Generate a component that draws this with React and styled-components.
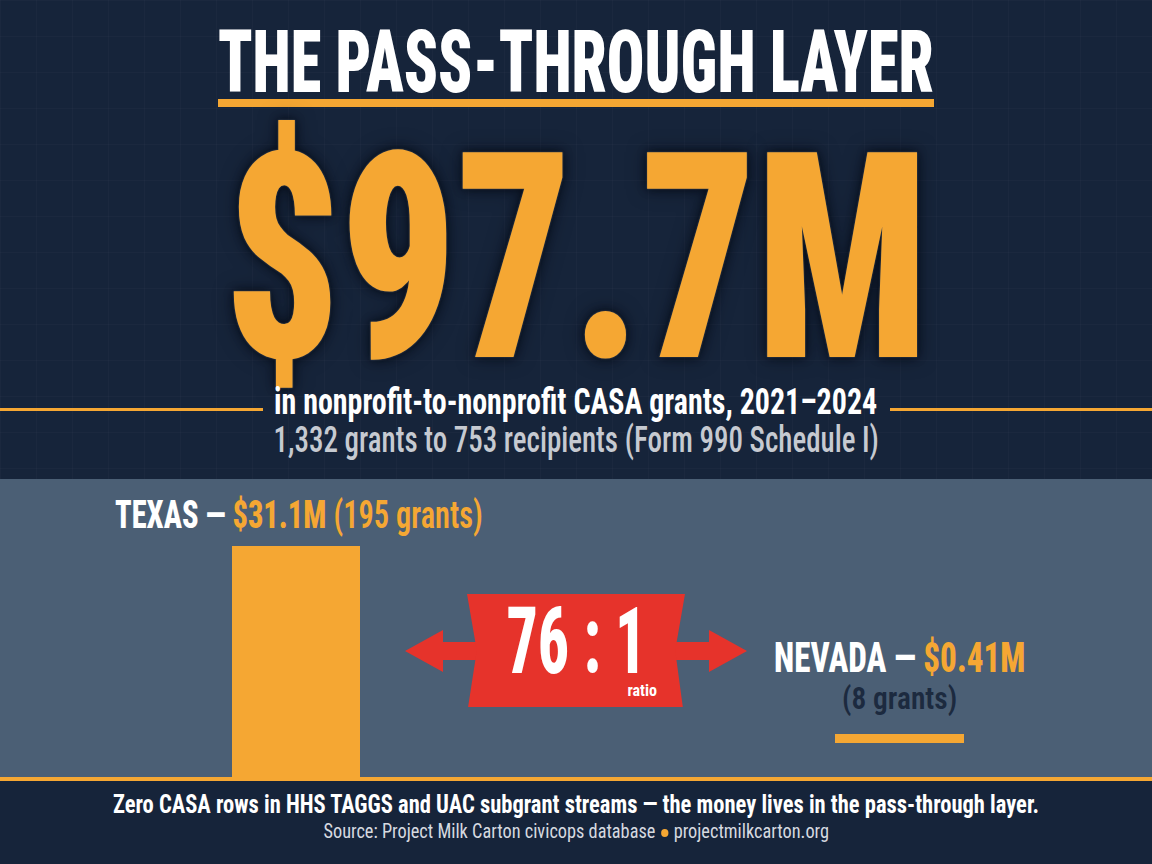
import React, { useLayoutEffect, useRef, useState } from "react";
import styled, { createGlobalStyle } from "styled-components";

const NAVY = "#16243a";
const SLATE = "#4b5f75";
const ORANGE = "#f5a733";
const RED = "#e6332b";

const GlobalStyle = createGlobalStyle`
  body {
    margin: 0;
    background: ${NAVY};
    font-family: "Roboto Condensed", "Roboto", sans-serif;
  }
`;

// squeezes a single line of text to an exact width (the poster uses a very narrow face)
const Fit = ({ width, align = "center", children }) => {
  const ref = useRef(null);
  const [scale, setScale] = useState(1);

  useLayoutEffect(() => {
    const measure = () => {
      const el = ref.current;
      if (el && el.offsetWidth) setScale(width / el.offsetWidth);
    };
    measure();
    if (document.fonts) document.fonts.ready.then(measure);
  }, [width]);

  return (
    <FitBox $width={width} $align={align}>
      <FitText ref={ref} $align={align} style={{ transform: `scaleX(${scale})` }}>
        {children}
      </FitText>
    </FitBox>
  );
};

const FitBox = styled.div`
  display: flex;
  justify-content: ${(p) => (p.$align === "left" ? "flex-start" : "center")};
  width: ${(p) => p.$width}px;
`;

const FitText = styled.span`
  flex: none;
  display: inline-block;
  white-space: nowrap;
  transform-origin: ${(p) => (p.$align === "left" ? "left" : "center")} center;
`;

const Poster = styled.div`
  width: 1152px;
  height: 864px;
  display: flex;
  flex-direction: column;
  overflow: hidden;
`;

const Hero = styled.section`
  height: 479px;
  flex: none;
  display: flex;
  flex-direction: column;
  align-items: center;
  padding-top: 24px;
  box-sizing: border-box;
  background-color: ${NAVY};
  background-image: linear-gradient(rgba(255, 255, 255, 0.018) 1px, transparent 1px),
    linear-gradient(90deg, rgba(255, 255, 255, 0.018) 1px, transparent 1px);
  background-size: 36px 36px;
`;

const Title = styled.h1`
  margin: 0;
  color: #ffffff;
  font-size: 87px;
  font-weight: 900;
  line-height: 76px;
`;

const Underline = styled.div`
  width: 716px;
  height: 8px;
  margin-top: -1px;
  background: ${ORANGE};
`;

const BigNumber = styled.div`
  margin-top: 37px;
  color: ${ORANGE};
  font-size: 288px;
  font-weight: 900;
  line-height: 230px;
  text-shadow: 0 0 2px rgba(150, 160, 170, 0.55), 0 0 10px rgba(3, 8, 18, 0.85),
    0 0 22px rgba(3, 8, 18, 0.5);
`;

const RuleRow = styled.div`
  align-self: stretch;
  display: grid;
  grid-template-columns: 1fr 603px 1fr;
  column-gap: 12px;
  margin-top: 8px;
`;

const Rule = styled.div`
  height: 3px;
  margin-top: 26px;
  background: ${ORANGE};
`;

const Lead = styled.div`
  color: #ffffff;
  font-size: 37px;
  font-weight: 700;
  line-height: 40px;
`;

const SubLead = styled.div`
  color: #c6cad1;
  font-size: 36px;
  font-weight: 500;
  line-height: 38px;
  margin-top: -1px;
`;

const Compare = styled.section`
  flex: 1;
  display: flex;
  padding-left: 115px;
  background: ${SLATE};
`;

const BigState = styled.div`
  width: 290px;
  flex: none;
  display: flex;
  flex-direction: column;
`;

const StateLine = styled.div`
  margin-top: ${(p) => p.$top}px;
  font-size: ${(p) => p.$size}px;
  font-weight: 800;
  line-height: ${(p) => p.$lh}px;
  color: #ffffff;
`;

const Amount = styled.span`
  color: ${ORANGE};
  font-weight: ${(p) => (p.$light ? 600 : 800)};
`;

const TexasBar = styled.div`
  flex: 1;
  width: 128px;
  margin: 11px 0 0 117px;
  background: ${ORANGE};
`;

const RatioGroup = styled.div`
  align-self: flex-start;
  margin-top: 115px;
  display: flex;
  align-items: center;
`;

const Arrow = styled.svg`
  flex: none;
  display: block;
  margin: ${(p) => (p.$side === "left" ? "0 -10px 0 0" : "0 0 0 -10px")};
`;

const Badge = styled.div`
  width: 218px;
  height: 113px;
  flex: none;
  display: flex;
  flex-direction: column;
  align-items: center;
  padding-top: 15px;
  box-sizing: border-box;
  background: ${RED};
  clip-path: polygon(0 0, 100% 0, 95.5% 50%, 99% 100%, 0.5% 100%, 4.5% 50%);
  color: #ffffff;
`;

const RatioNumber = styled.div`
  font-size: 93px;
  font-weight: 800;
  line-height: 66px;
`;

const RatioWord = styled.div`
  align-self: flex-end;
  margin: 8px 28px 0 0;
  font-size: 16px;
  font-weight: 700;
  line-height: 16px;
`;

const SmallState = styled.div`
  margin: 157px 0 0 27px;
  width: 251px;
  display: flex;
  flex-direction: column;
  align-items: center;
`;

const GrantCount = styled.div`
  margin-top: 2px;
  color: #1c2a3f;
  font-size: 31px;
  font-weight: 600;
  line-height: 34px;
`;

const NevadaBar = styled.div`
  width: 129px;
  height: 9px;
  margin-top: 18px;
  background: ${ORANGE};
`;

const Baseline = styled.div`
  height: 4px;
  flex: none;
  background: ${ORANGE};
`;

const Footer = styled.footer`
  height: 83px;
  flex: none;
  display: flex;
  flex-direction: column;
  align-items: center;
  padding-top: 10px;
  box-sizing: border-box;
  background: ${NAVY};
`;

const Takeaway = styled.div`
  color: #ffffff;
  font-size: 25px;
  font-weight: 700;
  line-height: 28px;
`;

const Source = styled.div`
  color: #d6dae0;
  font-size: 20px;
  font-weight: 400;
  line-height: 24px;
`;

const Dot = styled.span`
  display: inline-block;
  width: 8px;
  height: 8px;
  margin: 0 6px;
  border-radius: 50%;
  background: ${ORANGE};
  vertical-align: middle;
`;

export default function App() {
  return (
    <Poster>
      <GlobalStyle />
      <Hero>
        <Title>
          <Fit width={716}>THE PASS-THROUGH LAYER</Fit>
        </Title>
        <Underline />
        <BigNumber>
          <Fit width={704}>$97.7M</Fit>
        </BigNumber>
        <RuleRow>
          <Rule />
          <Lead>
            <Fit width={603}>in nonprofit-to-nonprofit CASA grants, 2021–2024</Fit>
          </Lead>
          <Rule />
        </RuleRow>
        <SubLead>
          <Fit width={605}>1,332 grants to 753 recipients (Form 990 Schedule I)</Fit>
        </SubLead>
      </Hero>

      <Compare>
        <BigState>
          <StateLine $top={16} $size={39} $lh={40}>
            <Fit width={368} align="left">
              TEXAS — <Amount>$31.1M</Amount> <Amount $light>(195 grants)</Amount>
            </Fit>
          </StateLine>
          <TexasBar />
        </BigState>

        <RatioGroup>
          <Arrow $side="left" width="72" height="42" viewBox="0 0 72 42">
            <polygon points="0,21 38,0 38,12 72,12 72,30 38,30 38,42" fill={RED} />
          </Arrow>
          <Badge>
            <RatioNumber>
              <Fit width={140}>76 : 1</Fit>
            </RatioNumber>
            <RatioWord>ratio</RatioWord>
          </Badge>
          <Arrow $side="right" width="72" height="42" viewBox="0 0 72 42">
            <polygon points="72,21 34,0 34,12 0,12 0,30 34,30 34,42" fill={RED} />
          </Arrow>
        </RatioGroup>

        <SmallState>
          <StateLine $top={0} $size={42} $lh={44}>
            <Fit width={251}>
              NEVADA — <Amount>$0.41M</Amount>
            </Fit>
          </StateLine>
          <GrantCount>
            <Fit width={115}>(8 grants)</Fit>
          </GrantCount>
          <NevadaBar />
        </SmallState>
      </Compare>

      <Baseline />

      <Footer>
        <Takeaway>
          <Fit width={926}>
            Zero CASA rows in HHS TAGGS and UAC subgrant streams — the money lives in the pass-through layer.
          </Fit>
        </Takeaway>
        <Source>
          <Fit width={506}>
            Source: Project Milk Carton civicops database<Dot />projectmilkcarton.org
          </Fit>
        </Source>
      </Footer>
    </Poster>
  );
}
